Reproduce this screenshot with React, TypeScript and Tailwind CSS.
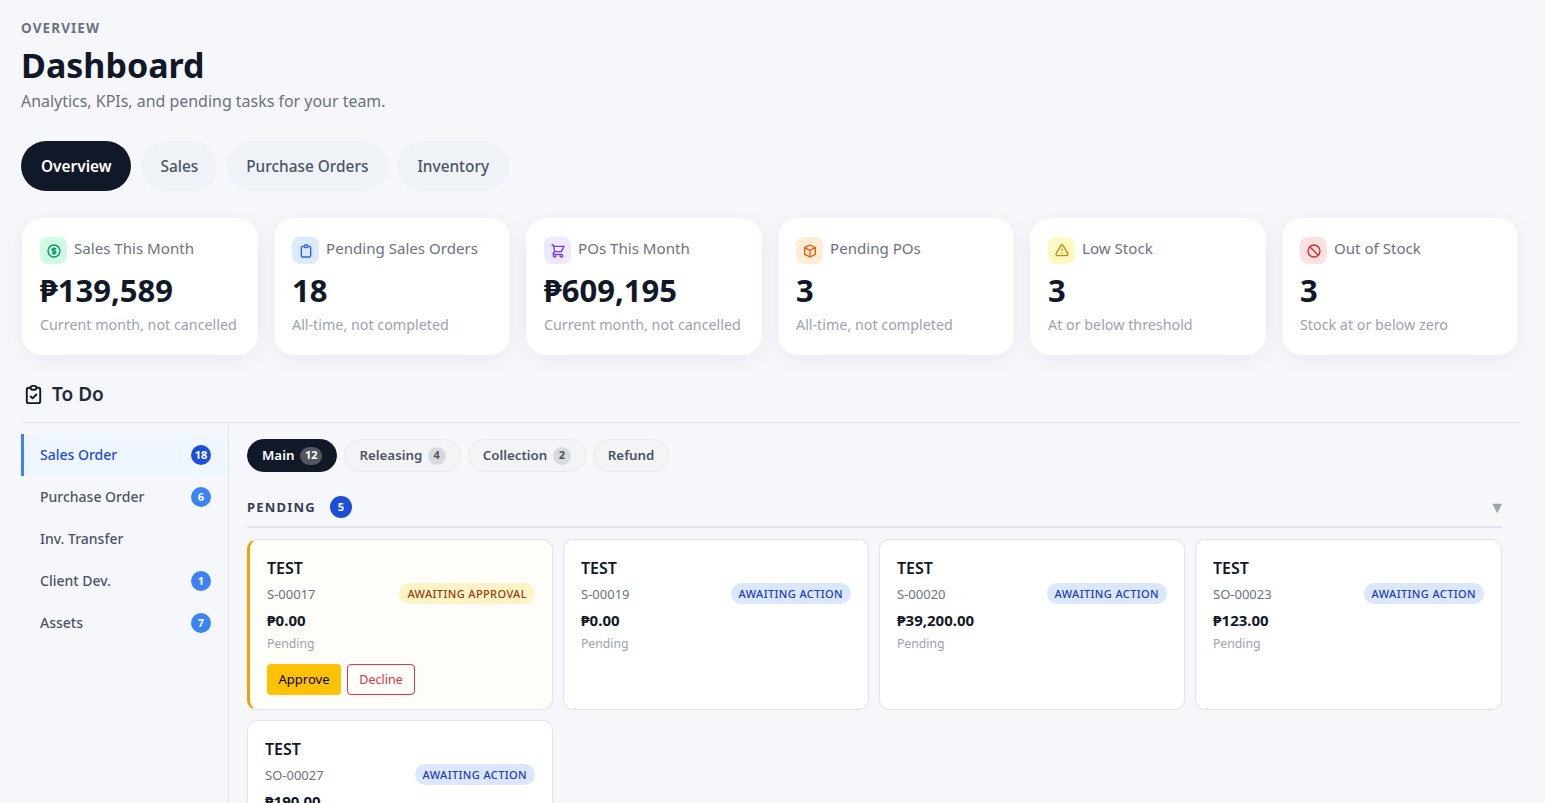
import {
  HiOutlineBan,
  HiOutlineClipboard,
  HiOutlineClipboardCheck,
  HiOutlineCube,
  HiOutlineCurrencyDollar,
  HiOutlineExclamation,
  HiOutlineShoppingCart,
} from "react-icons/hi";

const kpis = [
  { label: "Sales This Month", value: "₱139,589", note: "Current month, not cancelled", icon: <HiOutlineCurrencyDollar size={16} />, tone: "bg-[#d1fae5] text-[#059669]" },
  { label: "Pending Sales Orders", value: "18", note: "All-time, not completed", icon: <HiOutlineClipboard size={16} />, tone: "bg-[#dbeafe] text-[#2563eb]" },
  { label: "POs This Month", value: "₱609,195", note: "Current month, not cancelled", icon: <HiOutlineShoppingCart size={16} />, tone: "bg-[#ede9fe] text-[#7c3aed]" },
  { label: "Pending POs", value: "3", note: "All-time, not completed", icon: <HiOutlineCube size={16} />, tone: "bg-[#ffedd5] text-[#ea580c]" },
  { label: "Low Stock", value: "3", note: "At or below threshold", icon: <HiOutlineExclamation size={16} />, tone: "bg-[#fef9c3] text-[#ca8a04]" },
  { label: "Out of Stock", value: "3", note: "Stock at or below zero", icon: <HiOutlineBan size={16} />, tone: "bg-[#fee2e2] text-[#dc2626]" },
];

const sideItems = [
  { label: "Sales Order", count: "18", active: true },
  { label: "Purchase Order", count: "6" },
  { label: "Inv. Transfer" },
  { label: "Client Dev.", count: "1" },
  { label: "Assets", count: "7" },
];

const subTabs = [
  { label: "Main", count: "12", active: true },
  { label: "Releasing", count: "4" },
  { label: "Collection", count: "2" },
  { label: "Refund" },
];

const orders = [
  { code: "S-00019", amount: "₱0.00" },
  { code: "S-00020", amount: "₱39,200.00" },
  { code: "SO-00023", amount: "₱123.00" },
];

function OrderBody({ code, amount, badge, badgeClass }: { code: string; amount: string; badge: string; badgeClass: string }) {
  return (
    <>
      <div className="text-base leading-[22px] font-semibold text-[#111827]">TEST</div>
      <div className="mt-[4px] flex items-start justify-between">
        <span className="text-[13px] leading-[22px] text-[#6b7280]">{code}</span>
        <span className={`rounded-full px-2 py-[2px] text-[11px] leading-[17px] font-medium tracking-[0.4px] ${badgeClass}`}>{badge}</span>
      </div>
      <div className="mt-[5px] text-[15px] leading-[20px] font-bold text-[#111827]">{amount}</div>
      <div className="mt-[5px] text-[12.2px] leading-[18px] text-[#9ca3af]">Pending</div>
    </>
  );
}

export default function App() {
  return (
    <div className="h-[803px] overflow-hidden bg-[#f5f7fb] pt-[20px] pl-[21px] pr-[25px] font-['Noto_Sans',sans-serif]">
      <div className="text-[13.5px] leading-[17px] font-bold tracking-[1.1px] text-[#6b7280]">OVERVIEW</div>
      <h1 className="mt-[4px] text-[34px] leading-[48px] font-bold text-[#111827]">Dashboard</h1>
      <p className="mt-px text-[15.95px] leading-[22px] text-[#6b7280]">Analytics, KPIs, and pending tasks for your team.</p>

      <div className="mt-[29px] flex gap-[9px]">
        <button className="mr-px h-[50px] rounded-full bg-[#111827] px-5 pt-px text-[15.4px] font-semibold text-white">Overview</button>
        <button className="h-[50px] rounded-full bg-[#eff2f6] px-[19px] pt-px text-[15.4px] font-medium text-[#4b5563]">Sales</button>
        <button className="h-[50px] rounded-full bg-[#eff2f6] px-5 pt-px text-[15.4px] font-medium text-[#4b5563]">Purchase Orders</button>
        <button className="h-[50px] rounded-full bg-[#eff2f6] px-5 pt-px text-[15.4px] font-medium text-[#4b5563]">Inventory</button>
      </div>

      <div className="mt-[27px] grid grid-cols-[repeat(6,236px)] gap-4 pl-px">
        {kpis.map((k) => (
          <div key={k.label} className="h-[137px] rounded-[20px] bg-white px-[18px] pt-[19px] shadow-[0_4px_20px_rgba(17,24,39,0.06)]">
            <div className="flex items-start gap-[7px]">
              <span className={`flex size-[27px] items-center justify-center rounded-lg ${k.tone}`}>{k.icon}</span>
              <span className="text-[15.1px] leading-[23px] text-[#6b7280]">{k.label}</span>
            </div>
            <div className="mt-[5px] text-[31px] leading-[42px] font-bold text-[#111827]">{k.value}</div>
            <div className="mt-[2px] text-[14.3px] leading-[24px] text-[#9ca3af]">{k.note}</div>
          </div>
        ))}
      </div>

      <div className="mt-[24px] flex h-[30px] items-center gap-[7px] pl-px">
        <HiOutlineClipboardCheck size={23} className="text-[#111827]" />
        <span className="text-[19px] font-semibold text-[#1f2937]">To Do</span>
      </div>

      <div className="mt-[13px] flex border-t border-[#e0e3ea]">
        <aside className="h-[400px] w-[208px] shrink-0 border-r border-[#e0e3ea] pt-[11px]">
          {sideItems.map((s) => (
            <div
              key={s.label}
              className={`flex h-[42px] items-center justify-between border-l-[3px] pr-[17px] pl-4 text-sm ${
                s.active ? "border-[#3b82f6] bg-[#eff6ff] font-medium text-[#1d4ed8]" : "border-transparent font-medium text-[#4b5563]"
              }`}
            >
              <span>{s.label}</span>
              {s.count && (
                <span className={`flex size-5 items-center justify-center rounded-full text-[11px] font-bold text-white ${s.active ? "bg-[#1d4ed8]" : "bg-[#3b82f6]"}`}>
                  {s.count}
                </span>
              )}
            </div>
          ))}
        </aside>

        <main className="min-w-0 flex-1 pt-4 pr-[18px] pl-[18px]">
          <div className="flex gap-[7px]">
            {subTabs.map((t) => (
              <div
                key={t.label}
                className={`flex h-[33px] items-center gap-[5.5px] rounded-full border px-[14px] text-[13.3px] font-semibold ${
                  t.active ? "border-[#111827] bg-[#111827] text-white" : "border-[#e5e7eb] bg-[#f3f4f6] text-[#4b5563]"
                }`}
              >
                <span>{t.label}</span>
                {t.count && (
                  <span className={`flex h-[18px] min-w-[18px] items-center justify-center rounded-full px-[5px] text-[11px] font-bold ${t.active ? "bg-[#52565f] text-white" : "bg-[#d9dadd] text-[#4b5563]"}`}>
                    {t.count}
                  </span>
                )}
              </div>
            ))}
          </div>

          <div className="mt-[23px] flex h-[33px] items-start justify-between border-b-2 border-[#e0e3ea]">
            <div className="mt-px flex items-center gap-[14px]">
              <span className="text-[13px] leading-[22px] font-bold tracking-[1.2px] text-[#374151]">PENDING</span>
              <span className="flex size-[22px] items-center justify-center rounded-full bg-[#1d4ed8] text-[11px] font-bold text-white">5</span>
            </div>
            <span className="mt-px -mr-[3px] text-base leading-[22px] text-[#9ca3af]">▼</span>
          </div>

          <div className="mt-[11px] grid grid-cols-[306px_306px_306px_307px] gap-[10px]">
            <div className="h-[171px] rounded-[10px] border border-l-[3px] border-[#e0e3ea] border-l-[#f59e0b] bg-[#fffdf7] py-[17px] pr-[17px] pl-[17px]">
              <OrderBody code="S-00017" amount="₱0.00" badge="AWAITING APPROVAL" badgeClass="bg-[#fef3c7] text-[#92400e]" />
              <div className="mt-[11px] flex gap-[6px]">
                <button className="h-[31px] w-[74px] rounded-[4px] bg-[#ffc107] pt-px text-[13px] text-black">Approve</button>
                <button className="h-[31px] w-[68px] rounded-[4px] border border-[#dc3545] pt-[2px] text-[12.5px] text-[#dc3545]">Decline</button>
              </div>
            </div>
            {orders.map((o) => (
              <div key={o.code} className="h-[171px] rounded-[10px] border border-[#e0e3ea] bg-white px-[17px] py-[17px]">
                <OrderBody code={o.code} amount={o.amount} badge="AWAITING ACTION" badgeClass="bg-[#dbe7fe] text-[#1e40af]" />
              </div>
            ))}
            <div className="h-[171px] rounded-[10px] border border-[#e0e3ea] bg-white px-[17px] py-[17px]">
              <OrderBody code="SO-00027" amount="₱190.00" badge="AWAITING ACTION" badgeClass="bg-[#dbe7fe] text-[#1e40af]" />
            </div>
          </div>
        </main>
      </div>
    </div>
  );
}
